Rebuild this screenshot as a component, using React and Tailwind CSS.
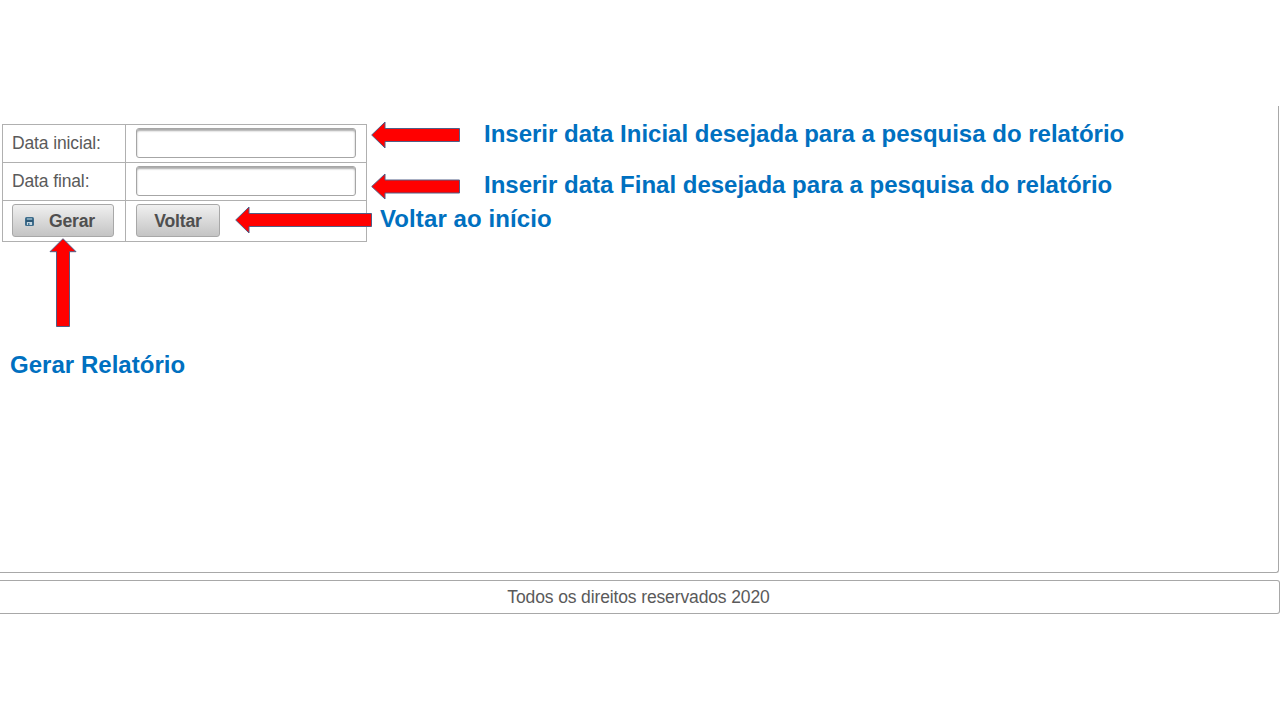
const notes = [
  { text: 'Inserir data Inicial desejada para a pesquisa do relatório', pos: 'left-[484px] top-[120px] tracking-normal' },
  { text: 'Inserir data Final desejada para a pesquisa do relatório', pos: 'left-[484px] top-[171px] tracking-normal' },
  { text: 'Voltar ao início', pos: 'left-[380px] top-[205px] tracking-[0.1px]' },
  { text: 'Gerar Relatório', pos: 'left-[10px] top-[351px] tracking-[0.03px]' },
];

const arrows = [
  '371.7,135 385,122 385,128.5 459.5,128.5 459.5,141.5 385,141.5 385,148',
  '371.7,186.5 385,174 385,180 459.5,180 459.5,193 385,193 385,199',
  '235.7,220 249,207 249,213.5 371.5,213.5 371.5,226.5 249,226.5 249,233',
  '63,238.7 76,251.7 69.5,251.7 69.5,326.5 56.5,326.5 56.5,251.7 50,251.7',
];

function SaveIcon() {
  return (
    <svg className="mt-[2px] h-[9px] w-[9px]" viewBox="0 0 9 9" aria-hidden="true">
      <rect width="9" height="9" rx="1.5" fill="#3f6d8c" />
      <rect x="2" y="1" width="5" height="2" fill="#7da3b8" />
      <rect x="1" y="3" width="7" height="2" fill="#2d5876" />
      <rect x="2" y="5" width="5" height="3" fill="#c5d6e0" />
      <rect x="3" y="6" width="1.5" height="2" fill="#4a7896" />
    </svg>
  );
}

function Row({ label, height, children }) {
  return (
    <div className={`flex border-b border-[#b0b0b0] ${height}`}>
      <div className="flex w-[123px] shrink-0 items-center border-r border-[#b0b0b0] pl-[9px]">{label}</div>
      <div className="flex flex-1 items-center pl-[10px]">{children}</div>
    </div>
  );
}

function DateInput({ label }) {
  return (
    <input
      aria-label={label}
      className="mb-[2px] h-[30px] w-[220px] rounded-[3px] border border-[#a6a6a6] bg-white px-2 shadow-[inset_0_2px_2px_#aaa] outline-none"
    />
  );
}

const button =
  'mb-px flex h-[33px] items-center rounded-[3px] border border-[#a8a8a8] bg-linear-to-b from-[#f0f0f0] to-[#c4c4c4] text-[17.6px] font-bold tracking-[-0.2px] text-[#4f4f4f]';

export default function App() {
  return (
    <div className="relative h-[720px] w-[1280px] overflow-hidden bg-white pt-[106px] font-['Liberation_Sans',Arial,sans-serif] text-[17.5px] tracking-[-0.13px] text-[#5a5a5a]">
      <main className="h-[467px] w-[1279px] rounded-br-[3px] border-r border-b border-[#a8a8a8] pt-[18px] pl-[2px]">
        <div className="w-[365px] border-t border-r border-l border-[#b0b0b0]">
          <Row label="Data inicial:" height="h-[38px]">
            <DateInput label="Data inicial" />
          </Row>
          <Row label="Data final:" height="h-[38px]">
            <DateInput label="Data final" />
          </Row>
          <Row
            height="h-[41px]"
            label={
              <button className={`${button} w-[102px] gap-[15px] pl-3`}>
                <SaveIcon />
                <span className="pt-px">Gerar</span>
              </button>
            }
          >
            <button className={`${button} w-[84px] justify-center`}>
              <span className="pt-px">Voltar</span>
            </button>
          </Row>
        </div>
      </main>
      <footer className="mt-[7px] flex h-[34px] items-center justify-center rounded-r-[3px] border border-l-0 border-[#a8a8a8] pr-[2px]">
        Todos os direitos reservados 2020
      </footer>

      <svg className="pointer-events-none absolute inset-0" width="1280" height="720" aria-hidden="true">
        {arrows.map((points) => (
          <polygon key={points} points={points} fill="#ff0000" stroke="#505e86" strokeWidth="1" />
        ))}
      </svg>
      {notes.map(({ text, pos }) => (
        <p
          key={text}
          className={`absolute text-[24px] leading-[28px] font-bold whitespace-nowrap text-[#0070c0] ${pos}`}
        >
          {text}
        </p>
      ))}
    </div>
  );
}
